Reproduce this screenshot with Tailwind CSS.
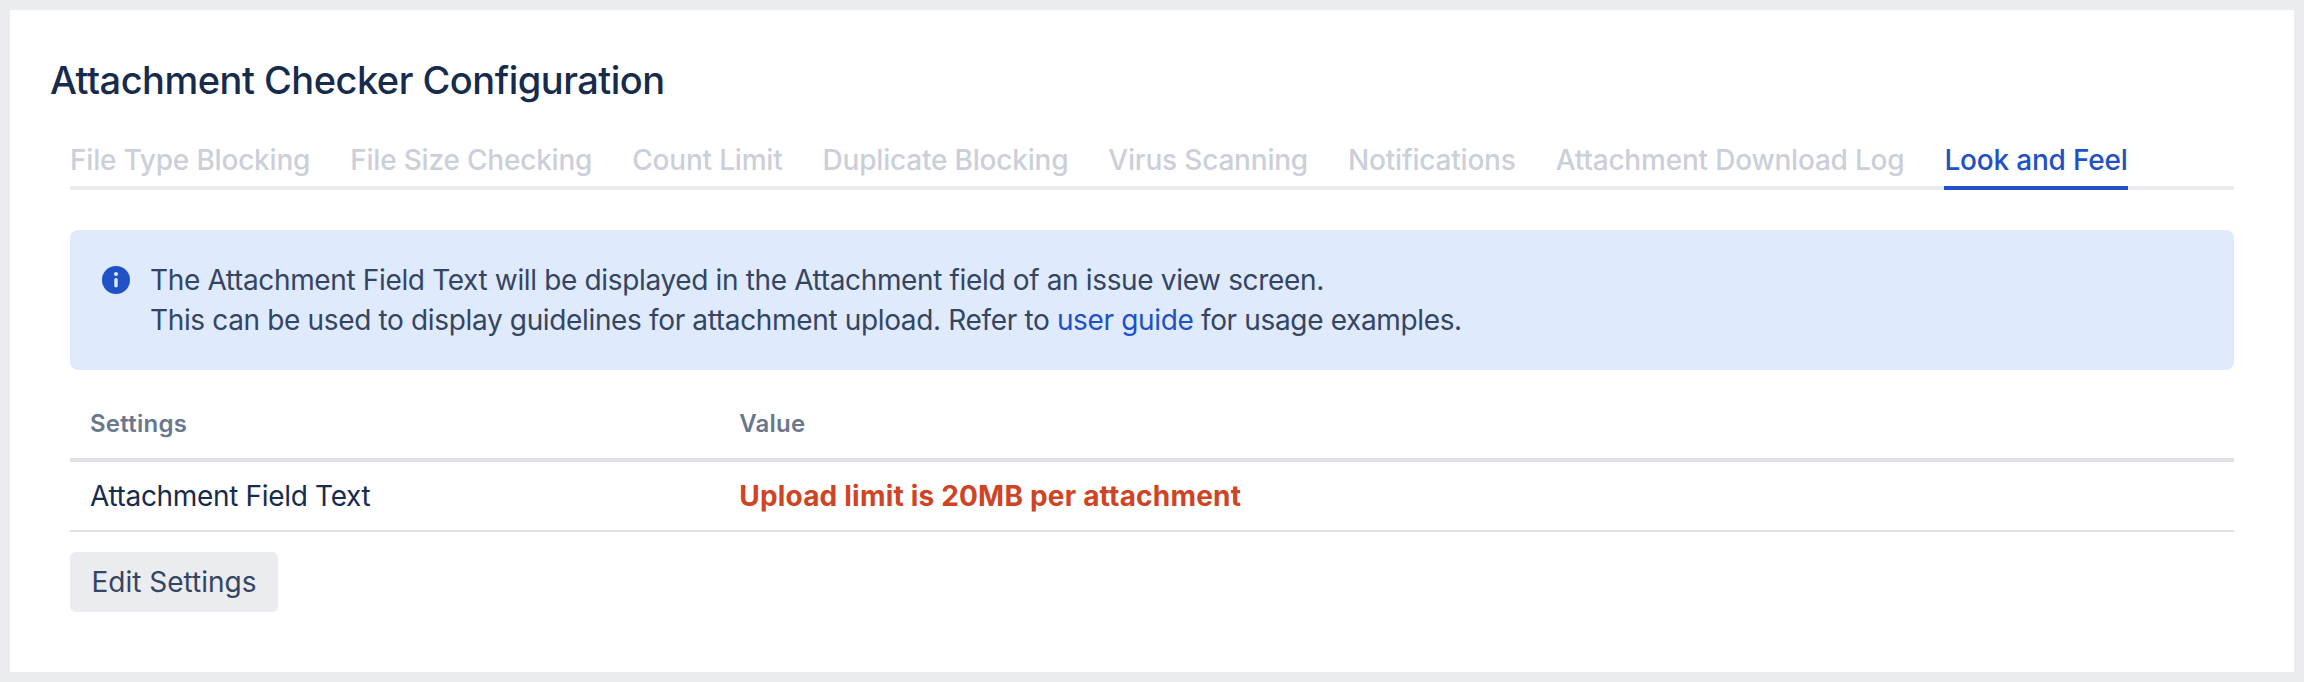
<!DOCTYPE html>
<html lang="en">
<head>
  <meta charset="UTF-8" />
  <title>Attachment Checker Configuration</title>
  <script src="https://cdn.jsdelivr.net/npm/@tailwindcss/browser@4"></script>
</head>
<body class="bg-[#ebecf0] font-['Inter',sans-serif] p-[10px] h-[682px] overflow-hidden">

  <main class="bg-white h-[662px] pt-[50px] px-[60px]">
    <h1 class="text-[38px] leading-[40px] tracking-[-0.5px] font-medium text-[#172b4d] -ml-[20px]">Attachment Checker Configuration</h1>

    <!-- Tabs -->
    <nav class="flex gap-10 mt-10 border-b-4 border-[#ebecf0] text-[28px] leading-[40px] tracking-[-0.2px] font-medium text-[#cbcfd9]">
      <a class="block h-[46px]">File Type Blocking</a>
      <a class="block h-[46px]">File Size Checking</a>
      <a class="block h-[46px]">Count Limit</a>
      <a class="block h-[46px]">Duplicate Blocking</a>
      <a class="block h-[46px]">Virus Scanning</a>
      <a class="block h-[46px]">Notifications</a>
      <a class="block h-[46px]">Attachment Download Log</a>
      <a class="block h-[50px] -mb-1 text-[#2151c7] border-b-4 border-[#2151c7]">Look and Feel</a>
    </nav>

    <!-- Info message -->
    <div class="flex gap-5 bg-[#dfeafc] rounded-lg mt-10 h-[140px] pt-[30px] px-[32px] text-[28px] leading-[40px] tracking-[-0.35px] text-[#344563]">
      <svg class="w-7 h-7 mt-[6px] shrink-0" viewBox="0 0 28 28">
        <circle cx="14" cy="14" r="14" fill="#2151c7" />
        <circle cx="14" cy="8" r="2" fill="#dfeafc" />
        <rect x="12.3" y="12" width="3.4" height="9.5" rx="1.7" fill="#dfeafc" />
      </svg>
      <p>The Attachment Field Text will be displayed in the Attachment field of an issue view screen.<br />This can be used to display guidelines for attachment upload. Refer to <a class="text-[#2151c7]">user guide</a> for usage examples.</p>
    </div>

    <!-- Settings table -->
    <div class="grid grid-cols-[30%_1fr] items-center h-[74px] pt-[2px] mt-[18px] border-b-4 border-[#dfe1e6] text-[24px] font-semibold tracking-[0.25px] text-[#6b778c]">
      <div class="pl-5">Settings</div>
      <div class="pl-5">Value</div>
    </div>
    <div class="grid grid-cols-[30%_1fr] items-center h-[70px] border-b-2 border-[#dfe1e6] text-[28px]">
      <div class="pl-5 tracking-[-0.33px] text-[#172b4d]">Attachment Field Text</div>
      <div class="pl-5 font-bold tracking-[0.2px] text-[#cf4424]">Upload limit is 20MB per attachment</div>
    </div>

    <button class="block mt-5 h-[60px] w-[208px] rounded-md bg-[#ebecf0] text-[28px] text-[#344563]">Edit Settings</button>
  </main>

</body>
</html>
